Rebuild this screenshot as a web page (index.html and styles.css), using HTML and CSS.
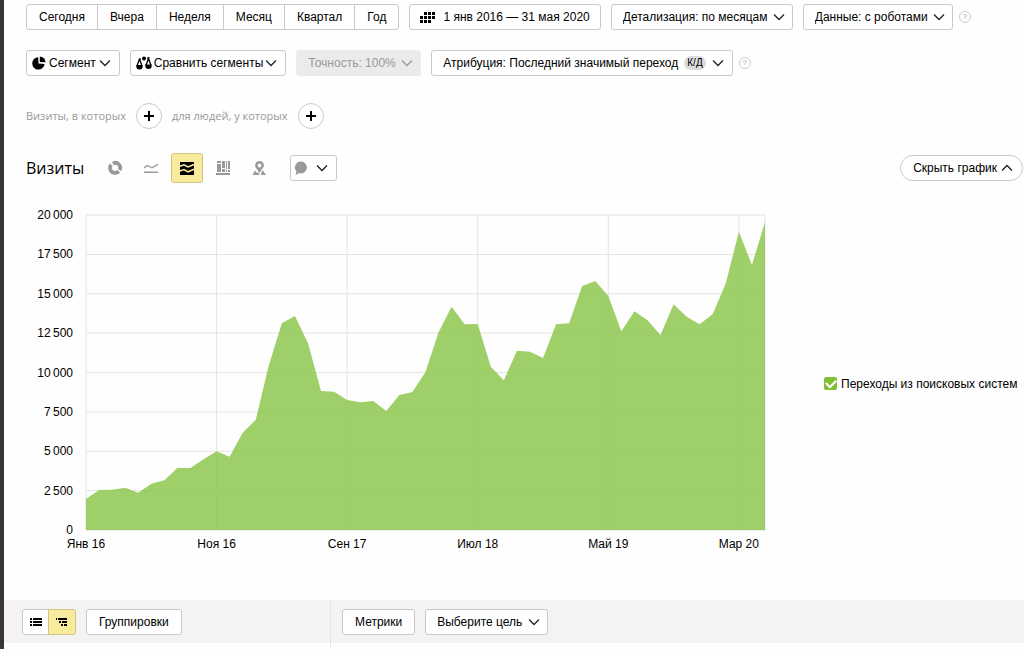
FILE: index.html
```html
<!DOCTYPE html>
<html lang="ru">
<head>
<meta charset="utf-8">
<title>Визиты</title>
<link rel="stylesheet" href="styles.css">
</head>
<body>
<svg class="sprite" aria-hidden="true">
  <symbol id="chevron" viewBox="0 0 12 8"><path d="M1 1.5 6 6.5 11 1.5" fill="none" stroke="currentColor" stroke-width="1.3"/></symbol>
  <symbol id="plus" viewBox="0 0 12 12"><path d="M6 1v10M1 6h10" fill="none" stroke="currentColor" stroke-width="2"/></symbol>
</svg>
<main class="app">
  <div class="toolbar toolbar-period">
    <div class="group">
      <button type="button" class="btn">Сегодня</button>
      <button type="button" class="btn">Вчера</button>
      <button type="button" class="btn">Неделя</button>
      <button type="button" class="btn">Месяц</button>
      <button type="button" class="btn">Квартал</button>
      <button type="button" class="btn">Год</button>
    </div>
    <button type="button" class="btn btn-date">
      <svg class="icon-calendar" viewBox="0 0 15 11" aria-hidden="true"><path d="M4 0h3v3H4zM8 0h3v3H8zM12 0h3v3h-3zM0 4h3v3H0zM4 4h3v3H4zM8 4h3v3H8zM12 4h3v3h-3zM0 8h3v3H0zM4 8h3v3H4zM8 8h3v3H8z"/></svg>
      1 янв 2016 — 31 мая 2020
    </button>
    <span class="select">
      <select aria-label="Детализация"><option>Детализация: по месяцам</option></select>
      <svg class="chevron" aria-hidden="true"><use href="#chevron"/></svg>
    </span>
    <span class="with-help">
      <span class="select">
        <select aria-label="Данные"><option>Данные: с роботами</option></select>
        <svg class="chevron" aria-hidden="true"><use href="#chevron"/></svg>
      </span>
      <button type="button" class="help" aria-label="Справка о данных">?</button>
    </span>
  </div>

  <div class="toolbar toolbar-segment">
    <button type="button" class="btn btn-icon">
      <svg class="icon-pie" viewBox="0 0 14 14" aria-hidden="true"><path d="M6.2 1.2A6.200 6.200 0 1 0 12.600 8L6.500 7.600Z"/><path d="M7.800 0.400A6 6 0 0 1 13.600 6.300L7.800 6Z"/></svg>
      Сегмент
      <svg class="chevron" aria-hidden="true"><use href="#chevron"/></svg>
    </button>
    <button type="button" class="btn btn-icon btn-tight">
      <svg class="icon-scales" viewBox="0 0 16 14" aria-hidden="true"><path d="M3.500 3 1 10M3.500 3 6 10M12.500 2.500 10 9.500M12.500 2.500 15 9.500" fill="none" stroke="currentColor" stroke-width="1.300"/><path d="M0.300 9h6.400v1.200a3.200 3.200 0 0 1-6.400 0zM9.300 8.500h6.400v1.200a3.200 3.200 0 0 1-6.400 0z"/><circle cx="8" cy="2.600" r="2"/><path d="M2.500 2.800 5 2.200v1.200L3.500 4zM11 1.600l2.500-.6v1.500L11 2.800z"/></svg>
      Сравнить сегменты
      <svg class="chevron" aria-hidden="true"><use href="#chevron"/></svg>
    </button>
    <span class="select select-disabled">
      <select aria-label="Точность" disabled><option>Точность: 100%</option></select>
      <svg class="chevron" aria-hidden="true"><use href="#chevron"/></svg>
    </span>
    <span class="with-help">
      <button type="button" class="btn btn-menu">Атрибуция: Последний значимый переход <span class="pill">К/Д</span><svg class="chevron" aria-hidden="true"><use href="#chevron"/></svg></button>
      <button type="button" class="help" aria-label="Справка об атрибуции">?</button>
    </span>
  </div>

  <div class="conditions">
    <span>Визиты, в которых</span>
    <button type="button" class="round" aria-label="Добавить условие визита"><svg class="plus" aria-hidden="true"><use href="#plus"/></svg></button>
    <span>для людей, у которых</span>
    <button type="button" class="round" aria-label="Добавить условие для людей"><svg class="plus" aria-hidden="true"><use href="#plus"/></svg></button>
  </div>

  <header class="chart-head">
    <h1>Визиты</h1>
    <div class="views">
      <button type="button" class="view" aria-label="Круговая диаграмма"><svg viewBox="0 0 16 16"><g fill="none" stroke="currentColor" stroke-width="3.800"><path d="M4.200 4.800A4.700 4.700 0 1 0 11.700 11.200"/><path d="M6 3.600A4.700 4.700 0 0 1 12.500 10"/></g></svg></button>
      <button type="button" class="view" aria-label="Линии"><svg viewBox="0 0 16 16"><path d="M1 7.800 4.500 5.500 9 7.800 15 4.300M1 12.300h14" fill="none" stroke="currentColor" stroke-width="1.400"/></svg></button>
      <button type="button" class="view view-active" aria-label="Области" aria-pressed="true"><svg viewBox="0 0 16 16"><path d="M1 2h14v13H1z"/><path d="M1 6.200 5 4.800 9 7 15 4.500M1 11 5 9.600 9 11.800 15 9.300" fill="none" stroke="#f9eb9e" stroke-width="1.500"/></svg></button>
      <button type="button" class="view" aria-label="Колонки"><svg viewBox="0 0 16 16"><path d="M1 13h14v2H1zM2 1h4v2H2zM2 4h4v8H2zM7 1h3v7H7zM7 9h3v3H7zM11 1h1v8h-1zM11 10h1v2h-1zM13 1h2v8h-2zM13 10h2v2h-2z"/></svg></button>
      <button type="button" class="view" aria-label="Карта"><svg viewBox="0 0 16 16"><path fill-rule="evenodd" d="M8.500 1a4.400 4.400 0 0 1 4.400 4.400C12.900 8 10.200 8.500 9.500 12H7.500C7.500 9.500 4.100 8.500 4.100 5.400A4.400 4.400 0 0 1 8.500 1zm0 2.600a1.900 1.900 0 1 0 0 3.800 1.900 1.900 0 0 0 0-3.800z"/><path d="M4 10.500 6 13l3-.5-1.500 2.500H1.500zM12 10.500l3 4.500h-5L10.500 12z"/></svg></button>
    </div>
    <button type="button" class="btn btn-notes" aria-label="Примечания">
      <svg class="icon-note" viewBox="0 0 14 14" aria-hidden="true"><path d="M7 0.500a6 6 0 1 1-2.300 11.600C4 13 3 13.700 1.500 13.800 2.200 12.700 2.300 11.500 2.200 10.200A6 6 0 0 1 7 .5z"/></svg>
      <svg class="chevron" aria-hidden="true"><use href="#chevron"/></svg>
    </button>
    <button type="button" class="btn btn-hide">Скрыть график <svg class="chevron chevron-up" aria-hidden="true"><use href="#chevron"/></svg></button>
  </header>

  <section class="chart" aria-label="График визитов">
    <div class="y-axis">
      <span>20&thinsp;000</span><span>17&thinsp;500</span><span>15&thinsp;000</span><span>12&thinsp;500</span><span>10&thinsp;000</span><span>7&thinsp;500</span><span>5&thinsp;000</span><span>2&thinsp;500</span><span>0</span>
    </div>
    <div class="plot">
      <svg class="area" viewBox="0 0 52 315" preserveAspectRatio="none" role="img" aria-label="Переходы из поисковых систем">
        <path class="grid" d="M0 0H52M0 39.400H52M0 78.800H52M0 118.100H52M0 157.500H52M0 196.900H52M0 236.300H52M0 275.600H52M0 315H52M0 0V315M10 0V315M20 0V315M30 0V315M40 0V315M50 0V315M52 0V315"/>
        <polygon class="series" points="0,315 0,284 1,275 2,274.700 3,272.700 4,277.700 5,268.700 6,265.300 7,253 8,253 9,244.300 10,236.300 11,241.700 12,217.700 13,204.700 14,150.300 15,108.300 16,101 17,128.300 18,176 19,176.700 20,185 21,187.300 22,186 23,196 24,180 25,177 26,157 27,117.300 28,91.700 29,109.300 30,109 31,151.700 32,165.300 33,135.700 34,136.700 35,143 36,109.300 37,108.300 38,71 39,66 40,81 41,116.300 42,96.300 43,105.300 44,120 45,89.300 46,101.700 47,109.300 48,99 49,68.300 50,16.700 51,50 52,7 52,315"/>
      </svg>
      <div class="x-axis">
        <span>Янв 16</span><span>Ноя 16</span><span>Сен 17</span><span>Июл 18</span><span>Май 19</span><span>Мар 20</span>
      </div>
    </div>
    <label class="legend"><input type="checkbox" checked>Переходы из поисковых систем</label>
  </section>

  <footer class="table-head">
    <div class="dimension">
      <div class="bar">
        <div class="group">
          <button type="button" class="btn btn-mode" aria-label="Список"><svg viewBox="0 0 12 10"><path d="M0 1h2v2H0zM3 1h9v2H3zM0 4h2v2H0zM3 4h9v2H3zM0 7h2v2H0zM3 7h9v2H3z"/></svg></button>
          <button type="button" class="btn btn-mode btn-on" aria-label="Дерево" aria-pressed="true"><svg viewBox="0 0 12 10"><path d="M0 1h1v2H0zM2 1h9v2H2zM3 4h2v2H3zM6 4h5v2H6zM5 7h2v2H5zM8 7h3v2H8z"/></svg></button>
        </div>
        <button type="button" class="btn btn-wide">Группировки</button>
      </div>
    </div>
    <div class="metrics">
      <div class="bar">
        <button type="button" class="btn btn-wide">Метрики</button>
        <span class="select">
          <select aria-label="Цель"><option>Выберите цель</option></select>
          <svg class="chevron" aria-hidden="true"><use href="#chevron"/></svg>
        </span>
      </div>
    </div>
  </footer>
</main>
</body>
</html>
```
FILE: styles.css
```css
* { box-sizing: border-box; }
body {
  margin: 0;
  background: #fefefe;
  color: #000;
  font: 12px/16px "Liberation Sans", Arial, sans-serif;
  overflow-x: hidden;
}
.sprite { display: none; }
svg { display: block; flex: none; fill: currentColor; }
button, select { font: inherit; color: inherit; margin: 0; cursor: pointer; }
.app {
  min-height: 100vh;
  display: flex;
  flex-direction: column;
  border-left: 4px solid #393635;
  padding-top: 4px;
}
.toolbar { display: flex; align-items: center; gap: 10px; padding-left: 22px; white-space: nowrap; }
.toolbar-segment { margin-top: 20px; }

.btn, .select select {
  height: 26px;
  padding: 0 11px;
  border: 1px solid #c9c9c9;
  border-radius: 3px;
  background: #fff;
  white-space: nowrap;
}
.btn { display: inline-flex; align-items: center; justify-content: center; }
.group { display: flex; }
.group .btn { border-radius: 0; margin-left: -1px; padding: 0 12px; }
.group .btn:first-child { border-radius: 3px 0 0 3px; margin-left: 0; }
.group .btn:last-child { border-radius: 0 3px 3px 0; }
.btn-date { gap: 8px; padding: 0 10px; }
.btn-wide { padding: 0 12px; }
.icon-calendar { width: 15px; height: 11px; }
.chevron { width: 12px; height: 8px; color: #222; }
.chevron-up { transform: rotate(180deg); }
.btn-icon { padding: 0 8px 0 5px; gap: 3px; }
.btn-tight { gap: 2px; }
.icon-pie { width: 14px; height: 14px; }
.icon-scales { width: 16px; height: 14px; }
.btn-menu { padding-right: 8px; gap: 6px; }
.pill {
  padding: 0 3px;
  border-radius: 8px;
  background: #dcdcdc;
  font-size: 10px;
  line-height: 14px;
}

.select { position: relative; display: inline-flex; }
.select select { appearance: none; padding-right: 24px; }
.select .chevron { position: absolute; right: 8px; top: 9px; pointer-events: none; }
.select-disabled select { background: #ebebeb; border-color: #ebebeb; color: #999; opacity: 1; }
.select-disabled .chevron { color: #999; }

.with-help { display: flex; align-items: center; gap: 6px; }
.help {
  width: 12px;
  height: 12px;
  padding: 0;
  border: 1px solid #ccc;
  border-radius: 50%;
  background: none;
  color: #aaa;
  font-size: 8px;
  line-height: 10px;
}

.conditions {
  display: flex;
  align-items: center;
  gap: 10px;
  margin-top: 27px;
  padding-left: 22px;
  color: #999;
  font-family: "Open Sans", sans-serif;
  font-size: 11px;
}
.round {
  width: 26px;
  height: 26px;
  padding: 0;
  display: flex;
  align-items: center;
  justify-content: center;
  border: 1px solid #ccc;
  border-radius: 50%;
  background: #fff;
  color: #000;
}
.plus { width: 12px; height: 12px; }

.chart-head { display: flex; align-items: center; margin-top: 24px; padding: 0 1px 0 22px; }
h1 { margin: 0; font: 16px/24px "Open Sans", sans-serif; }
.views { display: flex; gap: 4px; margin-left: 15px; }
.view {
  width: 32px;
  height: 30px;
  padding: 0;
  display: flex;
  align-items: center;
  justify-content: center;
  border: 1px solid transparent;
  border-radius: 3px;
  background: none;
  color: #999;
}
.view svg { width: 16px; height: 16px; }
.view-active { background: #f9eb9e; border-color: #d0c583; color: #000; }
.btn-notes { margin-left: 15px; padding: 0 8px 0 3px; gap: 8px; }
.icon-note { width: 14px; height: 14px; color: #999; }
.btn-hide { margin-left: auto; border-radius: 13px; padding: 0 9px 0 12px; gap: 4px; }

.chart {
  display: grid;
  grid-template-columns: 69px minmax(0, 1fr) 200px;
  column-gap: 13px;
  margin-top: 24px;
}
.y-axis {
  height: 331px;
  display: flex;
  flex-direction: column;
  justify-content: space-between;
  text-align: right;
}
.plot { padding: 8px 46px 0 0; }
.area { width: 100%; height: 315px; overflow: visible; }
.grid { fill: none; stroke: #e4e4e4; stroke-width: 1; vector-effect: non-scaling-stroke; }
.series { fill: #8ec74f; fill-opacity: .85; }
.x-axis {
  display: grid;
  grid-template-columns: repeat(5, 10fr) 2fr;
  margin-top: 6px;
  white-space: nowrap;
}
.x-axis span { width: 0; display: flex; justify-content: center; }
.legend {
  display: flex;
  align-items: center;
  align-self: center;
  gap: 4px;
  padding-top: 8px;
  white-space: nowrap;
}
.legend input {
  appearance: none;
  width: 13px;
  height: 13px;
  margin: 0;
  flex: none;
  display: grid;
  place-items: center;
  border-radius: 2px;
  background: #83bf34;
}
.legend input:checked::before {
  content: "";
  width: 8px;
  height: 5px;
  margin-bottom: 3px;
  border: solid #fff;
  border-width: 0 0 2px 2px;
  transform: rotate(-45deg);
}

.table-head { flex: 1; display: flex; margin-top: 48px; }
.dimension { flex: 0 0 327px; border-right: 1px solid #e6e6e4; }
.metrics { flex: 1; }
.bar {
  height: 43px;
  display: flex;
  align-items: center;
  gap: 10px;
  background: #f4f3f1;
}
.dimension .bar { padding-left: 18px; }
.metrics .bar { padding-left: 11px; }
.group .btn-mode { width: 27px; padding: 0; }
.group .btn-mode + .btn-mode { width: 28px; }
.btn-mode svg { width: 12px; height: 10px; }
.btn-on { background: #f9eb9e; border-color: #d0c583; }
```
